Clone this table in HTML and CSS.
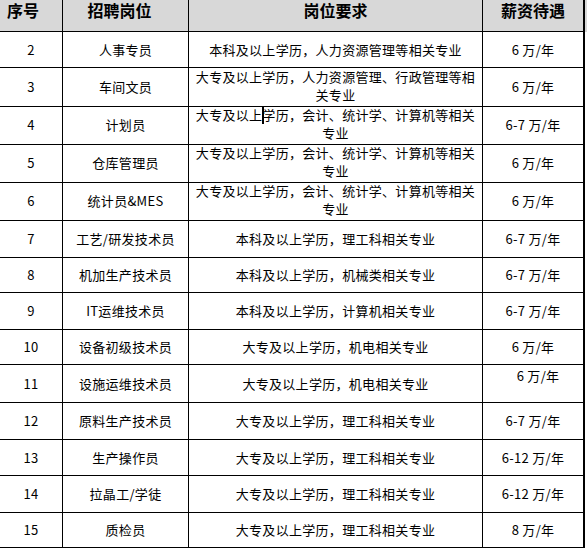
FILE: index.html
```html
<!DOCTYPE html>
<html lang="zh">
<head>
<meta charset="utf-8">
<title>招聘岗位</title>
<link rel="stylesheet" href="styles.css">
</head>
<body>
<div class="sheet">
  <div class="row head">
    <div class="cell c1"><span class="h-no">序号</span></div>
    <div class="cell c2"><span class="h-job">招聘岗位</span></div>
    <div class="cell c3"><span>岗位要求</span></div>
    <div class="cell c4"><span>薪资待遇</span></div>
  </div>
  <div class="row r36">
    <div class="cell c1">2</div>
    <div class="cell c2">人事专员</div>
    <div class="cell c3">本科及以上学历，人力资源管理等相关专业</div>
    <div class="cell c4">6 万/年</div>
  </div>
  <div class="row r38">
    <div class="cell c1">3</div>
    <div class="cell c2">车间文员</div>
    <div class="cell c3 two"><span class="txt">大专及以上学历，人力资源管理、行政管理等相关专业</span></div>
    <div class="cell c4">6 万/年</div>
  </div>
  <div class="row r38">
    <div class="cell c1">4</div>
    <div class="cell c2">计划员</div>
    <div class="cell c3 two"><span class="txt">大专及以上<span class="caret"></span>学历，会计、统计学、计算机等相关专业</span></div>
    <div class="cell c4">6-7 万/年</div>
  </div>
  <div class="row r38">
    <div class="cell c1">5</div>
    <div class="cell c2">仓库管理员</div>
    <div class="cell c3 two"><span class="txt">大专及以上学历，会计、统计学、计算机等相关专业</span></div>
    <div class="cell c4">6 万/年</div>
  </div>
  <div class="row r38">
    <div class="cell c1">6</div>
    <div class="cell c2">统计员&amp;MES</div>
    <div class="cell c3 two"><span class="txt">大专及以上学历，会计、统计学、计算机等相关专业</span></div>
    <div class="cell c4">6 万/年</div>
  </div>
  <div class="row r38">
    <div class="cell c1">7</div>
    <div class="cell c2">工艺/研发技术员</div>
    <div class="cell c3">本科及以上学历，理工科相关专业</div>
    <div class="cell c4">6-7 万/年</div>
  </div>
  <div class="row r35">
    <div class="cell c1">8</div>
    <div class="cell c2">机加生产技术员</div>
    <div class="cell c3">本科及以上学历，机械类相关专业</div>
    <div class="cell c4">6-7 万/年</div>
  </div>
  <div class="row r37">
    <div class="cell c1">9</div>
    <div class="cell c2">IT运维技术员</div>
    <div class="cell c3">本科及以上学历，计算机相关专业</div>
    <div class="cell c4">6-7 万/年</div>
  </div>
  <div class="row r35">
    <div class="cell c1">10</div>
    <div class="cell c2">设备初级技术员</div>
    <div class="cell c3">大专及以上学历，机电相关专业</div>
    <div class="cell c4">6 万/年</div>
  </div>
  <div class="row r38">
    <div class="cell c1">11</div>
    <div class="cell c2">设施运维技术员</div>
    <div class="cell c3">大专及以上学历，机电相关专业</div>
    <div class="cell c4 off">6 万/年</div>
  </div>
  <div class="row r37">
    <div class="cell c1">12</div>
    <div class="cell c2">原料生产技术员</div>
    <div class="cell c3">大专及以上学历，理工科相关专业</div>
    <div class="cell c4">6-7 万/年</div>
  </div>
  <div class="row r36">
    <div class="cell c1">13</div>
    <div class="cell c2">生产操作员</div>
    <div class="cell c3">大专及以上学历，理工科相关专业</div>
    <div class="cell c4">6-12 万/年</div>
  </div>
  <div class="row r37">
    <div class="cell c1">14</div>
    <div class="cell c2">拉晶工/学徒</div>
    <div class="cell c3">大专及以上学历，理工科相关专业</div>
    <div class="cell c4">6-12 万/年</div>
  </div>
  <div class="row r35 last">
    <div class="cell c1">15</div>
    <div class="cell c2">质检员</div>
    <div class="cell c3">大专及以上学历，理工科相关专业</div>
    <div class="cell c4">8 万/年</div>
  </div>
</div>
</body>
</html>
```

FILE: styles.css
```css
html, body {
  margin: 0;
  padding: 0;
  background: #ffffff;
}

body {
  font-family: "Noto Sans CJK SC", "Noto Sans", sans-serif;
  font-size: 13px;
  color: #000000;
}

.sheet {
  width: 587px;
  display: flex;
  flex-direction: column;
}

.row {
  display: grid;
  grid-template-columns: 63px 126px 294px 102px;
}

.head { height: 32px; background: #d8d8d8; }
.r35 { height: 35px; }
.r36 { height: 36px; }
.r37 { height: 37px; }
.r38 { height: 38px; }

.cell {
  box-sizing: border-box;
  border-right: 1px solid #000;
  border-bottom: 1px solid #000;
  display: flex;
  align-items: center;
  justify-content: center;
  text-align: center;
  line-height: 18px;
  letter-spacing: 0.3px;
  padding: 0 4px;
}

.c4 {
  border-right-width: 2px;
}

.two {
  padding-bottom: 2px;
}

.txt {
  display: block;
  text-align: center;
}

.head .cell {
  align-items: flex-start;
  font-size: 16px;
  font-weight: 700;
  line-height: 18px;
  letter-spacing: 0;
  padding-top: 1px;
}

.h-no { margin-right: 16px; }
.h-job { margin-right: 12px; }

.off {
  padding-left: 14px;
  padding-bottom: 16px;
}

.caret {
  display: inline-block;
  width: 2px;
  height: 17px;
  margin-right: -2px;
  background: #000;
  vertical-align: -4px;
}
```
